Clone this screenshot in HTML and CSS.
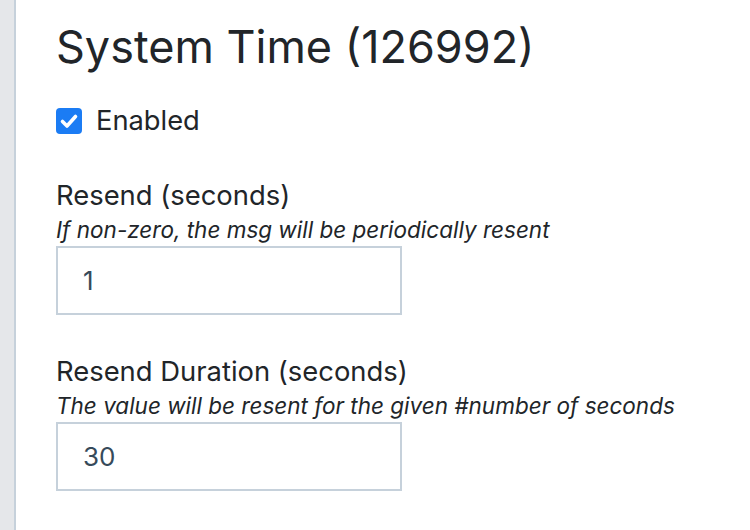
FILE: index.html
```html
<!DOCTYPE html>
<html>
<head>
<meta charset="utf-8">
<link rel="stylesheet" href="styles.css">
</head>
<body>
<div class="page">
  <div class="sidebar"></div>
  <main class="main">
    <h2 class="title">System Time (126992)</h2>
    <label class="check">
      <span class="box"><svg viewBox="0 0 26 26" width="26" height="26"><path d="M6.5 13.5 L11 18 L19.5 8.5" fill="none" stroke="#fff" stroke-width="3.6" stroke-linecap="round" stroke-linejoin="round"/></svg></span>
      <span class="check-label">Enabled</span>
    </label>
    <div class="field">
      <div class="label">Resend (seconds)</div>
      <div class="help">If non-zero, the msg will be periodically resent</div>
      <div class="input">1</div>
    </div>
    <div class="field">
      <div class="label">Resend Duration (seconds)</div>
      <div class="help">The value will be resent for the given #number of seconds</div>
      <div class="input">30</div>
    </div>
  </main>
</div>
</body>
</html>
```
FILE: styles.css
```css
html, body {
  margin: 0;
  padding: 0;
  background: #ffffff;
}
body {
  font-family: Inter, "Liberation Sans", sans-serif;
  color: #212529;
}
.page {
  display: flex;
  min-height: 530px;
}
.sidebar {
  width: 14px;
  background: #e5e7ea;
  border-right: 2px solid #c6d1db;
  flex: none;
}
.main {
  padding: 0 0 0 40px;
}
.title {
  margin: 21px 0 0 0;
  font-weight: 400;
  font-size: 45px;
  line-height: 52px;
}
.check {
  display: flex;
  align-items: center;
  gap: 14px;
  margin-top: 33px;
}
.box {
  width: 26px;
  height: 26px;
  border-radius: 4px;
  background: #1b7cf4;
  display: block;
}
.box svg { display: block; }
.check-label {
  font-size: 27.3px;
  line-height: 30px;
}
.field {
  margin-top: 43px;
}
.field + .field {
  margin-top: 40px;
}
.label {
  font-size: 27.4px;
  line-height: 32px;
}
.help {
  font-size: 22.5px;
  font-style: italic;
  line-height: 28px;
  margin-top: 5px;
}
.input {
  box-sizing: border-box;
  width: 346px;
  height: 69px;
  margin-top: 2px;
  border: 2px solid #c6d1db;
  padding: 0 0 0 25px;
  font-size: 26px;
  line-height: 65px;
  color: #364a5a;
}
```
